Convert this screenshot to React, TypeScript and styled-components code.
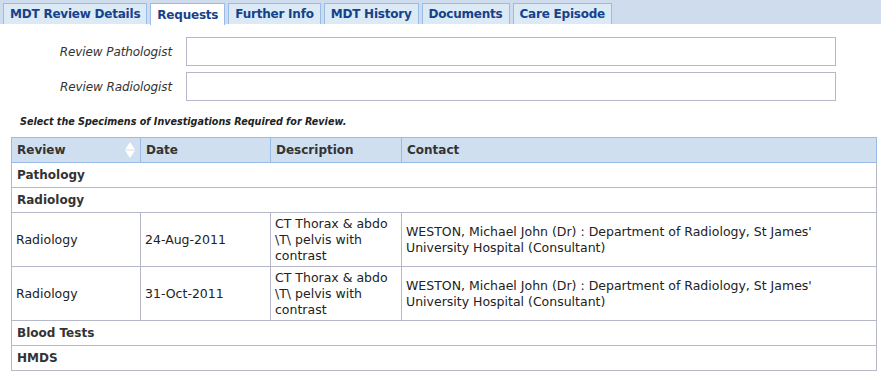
import React from "react";
import styled, { createGlobalStyle } from "styled-components";

interface Row {
  kind: "group" | "item";
  review: string;
  date?: string;
  description?: string[];
  contact?: string[];
}

const tabs = [
  "MDT Review Details",
  "Requests",
  "Further Info",
  "MDT History",
  "Documents",
  "Care Episode",
];

const contact = [
  "WESTON, Michael John (Dr) : Department of Radiology, St James'",
  "University Hospital (Consultant)",
];
const ctDesc = ["CT Thorax & abdo", "\\T\\ pelvis with", "contrast"];

const rows: Row[] = [
  { kind: "group", review: "Pathology" },
  { kind: "group", review: "Radiology" },
  { kind: "item", review: "Radiology", date: "24-Aug-2011", description: ctDesc, contact },
  { kind: "item", review: "Radiology", date: "31-Oct-2011", description: ctDesc, contact },
  { kind: "group", review: "Blood Tests" },
  { kind: "group", review: "HMDS" },
];

const App: React.FC = () => {
  return (
    <Page>
      <GlobalStyle />
      <TabStrip>
        {tabs.map((t) => (
          <Tab key={t} active={t === "Requests"}>
            {t}
          </Tab>
        ))}
      </TabStrip>
      <Form>
        <FieldLabel>Review Pathologist</FieldLabel>
        <TextBox />
        <FieldLabel>Review Radiologist</FieldLabel>
        <TextBox />
      </Form>
      <Hint>Select the Specimens of Investigations Required for Review.</Hint>
      <Table>
        <colgroup>
          <col style={{ width: 129 }} />
          <col style={{ width: 130 }} />
          <col style={{ width: 131 }} />
          <col />
        </colgroup>
        <thead>
          <tr>
            <Th>
              <HeadInner>
                Review
                <SortIcon width="12" height="18" viewBox="0 0 12 18">
                  <path d="M6 1 L11 8.5 L1 8.5 Z" fill="#fff" />
                  <path d="M6 17 L11 9.5 L1 9.5 Z" fill="#fff" />
                </SortIcon>
              </HeadInner>
            </Th>
            <Th>Date</Th>
            <Th>Description</Th>
            <Th>Contact</Th>
          </tr>
        </thead>
        <tbody>
          {rows.map((r, i) =>
            r.kind === "group" ? (
              <tr key={i}>
                <GroupCell colSpan={4}>{r.review}</GroupCell>
              </tr>
            ) : (
              <tr key={i}>
                <Td>{r.review}</Td>
                <Td>{r.date}</Td>
                <Td>
                  {r.description?.map((l) => (
                    <Line key={l}>{l}</Line>
                  ))}
                </Td>
                <Td>
                  {r.contact?.map((l) => (
                    <Line key={l}>{l}</Line>
                  ))}
                </Td>
              </tr>
            )
          )}
        </tbody>
      </Table>
    </Page>
  );
};

export default App;

const GlobalStyle = createGlobalStyle`
  body {
    margin: 0;
    background: #fff;
    font-family: "DejaVu Sans", Verdana, sans-serif;
  }
`;

const Page = styled.div`
  width: 881px;
  height: 373px;
  overflow: hidden;
  background: #fff;
`;

const TabStrip = styled.div`
  display: flex;
  gap: 3px;
  height: 24px;
  padding: 3px 0 0 3px;
  box-sizing: border-box;
  background: #cedced;
`;

const Tab = styled.div<{ active: boolean }>`
  height: ${({ active }) => (active ? "22px" : "21px")};
  box-sizing: border-box;
  padding: 0 6px;
  display: flex;
  align-items: center;
  border: 1px solid #99bbe8;
  border-bottom: none;
  background: ${({ active }) => (active ? "#fff" : "#dbeaf5")};
  color: #15428b;
  font-size: 12px;
  font-weight: bold;
  letter-spacing: -0.22px;
  white-space: nowrap;
`;

const Form = styled.div`
  display: grid;
  grid-template-columns: 172px 650px;
  column-gap: 14px;
  row-gap: 6px;
  margin-top: 13px;
`;

const FieldLabel = styled.div`
  text-align: right;
  align-self: center;
  font-size: 12px;
  font-style: italic;
  color: #333;
  letter-spacing: -0.1px;
`;

const TextBox = styled.div`
  height: 29px;
  box-sizing: border-box;
  border: 1px solid #b5b8c8;
  background: #fff;
`;

const Hint = styled.div`
  margin: 15px 0 0 20px;
  height: 21px;
  font-size: 9.6px;
  font-weight: bold;
  font-style: italic;
  color: #222;
`;

const Table = styled.table`
  margin-left: 11px;
  width: 866px;
  border-collapse: collapse;
  table-layout: fixed;
  font-size: 12.5px;
  color: #222;
`;

const Th = styled.th`
  height: 25px;
  box-sizing: border-box;
  padding: 0 5px;
  background: #d0dff0;
  border: 1px solid #99bbe8;
  text-align: left;
  font-size: 12px;
  font-weight: bold;
  color: #333;
`;

const HeadInner = styled.div`
  display: flex;
  align-items: center;
  justify-content: space-between;
`;

const SortIcon = styled.svg`
  display: block;
  margin-right: -1px;
`;

const GroupCell = styled.td`
  height: 25px;
  box-sizing: border-box;
  padding: 0 5px;
  border: 1px solid #b5b8c8;
  font-size: 12px;
  font-weight: bold;
  color: #333;
`;

const Td = styled.td`
  height: 54px;
  box-sizing: border-box;
  padding: 2px 4px;
  border: 1px solid #b5b8c8;
  vertical-align: middle;
  line-height: 16px;
`;

const Line = styled.div`
  white-space: nowrap;
`;
